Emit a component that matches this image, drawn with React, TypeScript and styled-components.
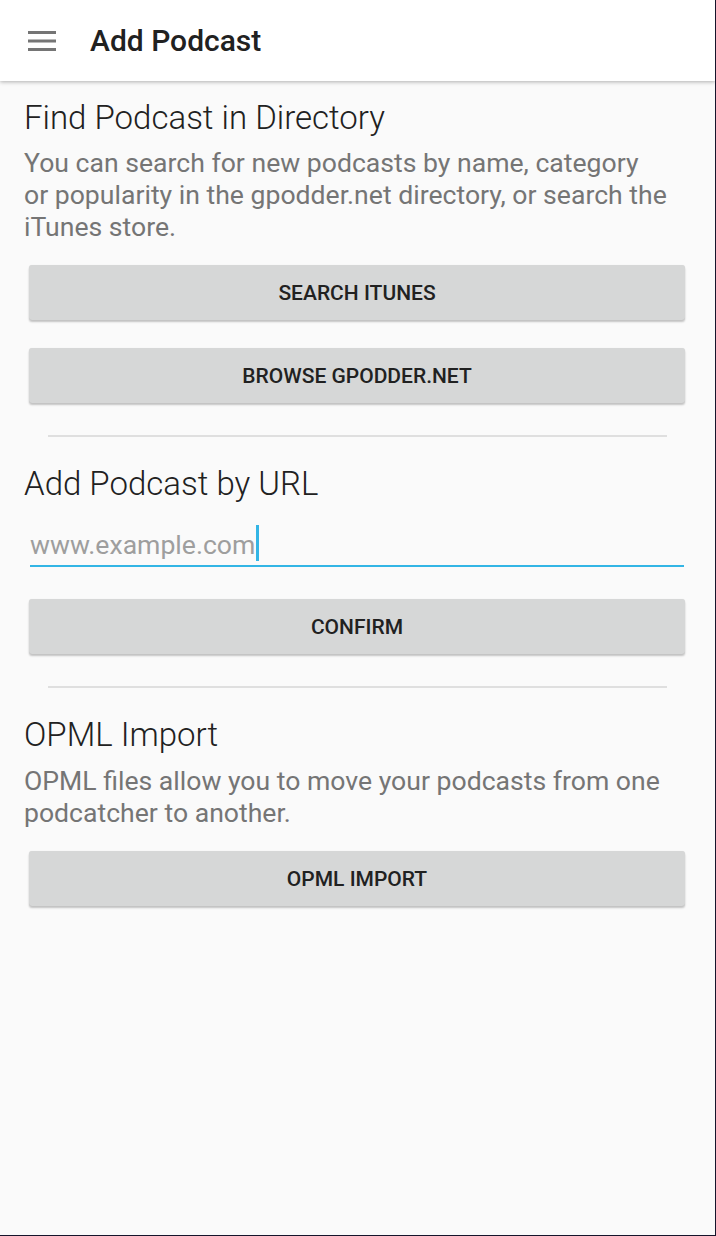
import React from "react";
import styled, { createGlobalStyle } from "styled-components";

const Global = createGlobalStyle`
  html, body { margin: 0; padding: 0; background: #fafafa; }
  body { font-family: Roboto, "Noto Sans", sans-serif; }
  * { box-sizing: border-box; }
`;

const Screen = styled.div`
  width: 716px;
  height: 1236px;
  background: #fafafa;
  border-right: 1px solid #16142b;
  border-bottom: 1px solid #16142b;
  display: flex;
  flex-direction: column;
  overflow: hidden;
`;

const AppBar = styled.header`
  height: 81px;
  flex: none;
  background: #ffffff;
  box-shadow: 0 1px 4px rgba(0, 0, 0, 0.3);
  display: flex;
  align-items: center;
  padding-left: 28px;
  position: relative;
  z-index: 1;
`;

const Title = styled.h1`
  margin: 0 0 0 34px;
  font-size: 30px;
  font-weight: 500;
  color: #212121;
`;

const Content = styled.main`
  display: flex;
  flex-direction: column;
  padding: 0 24px;
`;

const Heading = styled.h2<{ $top: number }>`
  margin: ${(p) => p.$top}px 0 0;
  font-size: 33px;
  line-height: 40px;
  font-weight: 300;
  color: #212121;
`;

const Description = styled.p<{ $top: number }>`
  margin: ${(p) => p.$top}px 24px 0 0;
  font-size: 26.6px;
  line-height: 32px;
  font-weight: 400;
  color: #757575;
`;

const RaisedButton = styled.button<{ $top: number }>`
  margin: ${(p) => p.$top}px 6px 0 5px;
  height: 55px;
  border: none;
  border-radius: 3px;
  background: #d6d7d7;
  box-shadow: 0 2px 2px rgba(0, 0, 0, 0.22), 0 0 1px rgba(0, 0, 0, 0.1);
  font-family: Roboto, sans-serif;
  font-size: 21px;
  font-weight: 500;
  color: #212121;
  text-transform: uppercase;
  cursor: pointer;
`;

const Divider = styled.hr<{ $top: number }>`
  margin: ${(p) => p.$top}px 24px 0;
  border: none;
  height: 2px;
  background: #dfdfdf;
`;

const InputWrap = styled.label`
  margin: 21px 7px 0 6px;
  height: 42px;
  border-bottom: 2px solid #33b5e5;
  display: flex;
  align-items: center;
`;

const UrlText = styled.span`
  font-size: 26.6px;
  color: #9e9e9e;
  line-height: 32px;
`;

const Caret = styled.span`
  display: inline-block;
  width: 3px;
  height: 36px;
  background: #33b5e5;
  margin: 0 0 4px 1px;
`;

function Hamburger() {
  return (
    <svg width="28" height="22" viewBox="0 0 28 22" aria-hidden>
      <rect x="0" y="1" width="28" height="3" fill="#757575" />
      <rect x="0" y="9.5" width="28" height="3" fill="#757575" />
      <rect x="0" y="18" width="28" height="3" fill="#757575" />
    </svg>
  );
}

export default function App() {
  return (
    <>
      <Global />
      <Screen>
        <AppBar>
          <Hamburger />
          <Title>Add Podcast</Title>
        </AppBar>
        <Content>
          <Heading $top={17}>Find Podcast in Directory</Heading>
          <Description $top={9}>
            You can search for new podcasts by name, category or popularity in the gpodder.net directory, or search the iTunes store.
          </Description>
          <RaisedButton $top={22}>Search iTunes</RaisedButton>
          <RaisedButton $top={28}>Browse gpodder.net</RaisedButton>
          <Divider $top={32} />
          <Heading $top={27}>Add Podcast by URL</Heading>
          <InputWrap>
            <UrlText>www.example.com</UrlText>
            <Caret />
          </InputWrap>
          <RaisedButton $top={32}>Confirm</RaisedButton>
          <Divider $top={32} />
          <Heading $top={27}>OPML Import</Heading>
          <Description $top={10}>
            OPML files allow you to move your podcasts from one podcatcher to another.
          </Description>
          <RaisedButton $top={22}>OPML Import</RaisedButton>
        </Content>
      </Screen>
    </>
  );
}
